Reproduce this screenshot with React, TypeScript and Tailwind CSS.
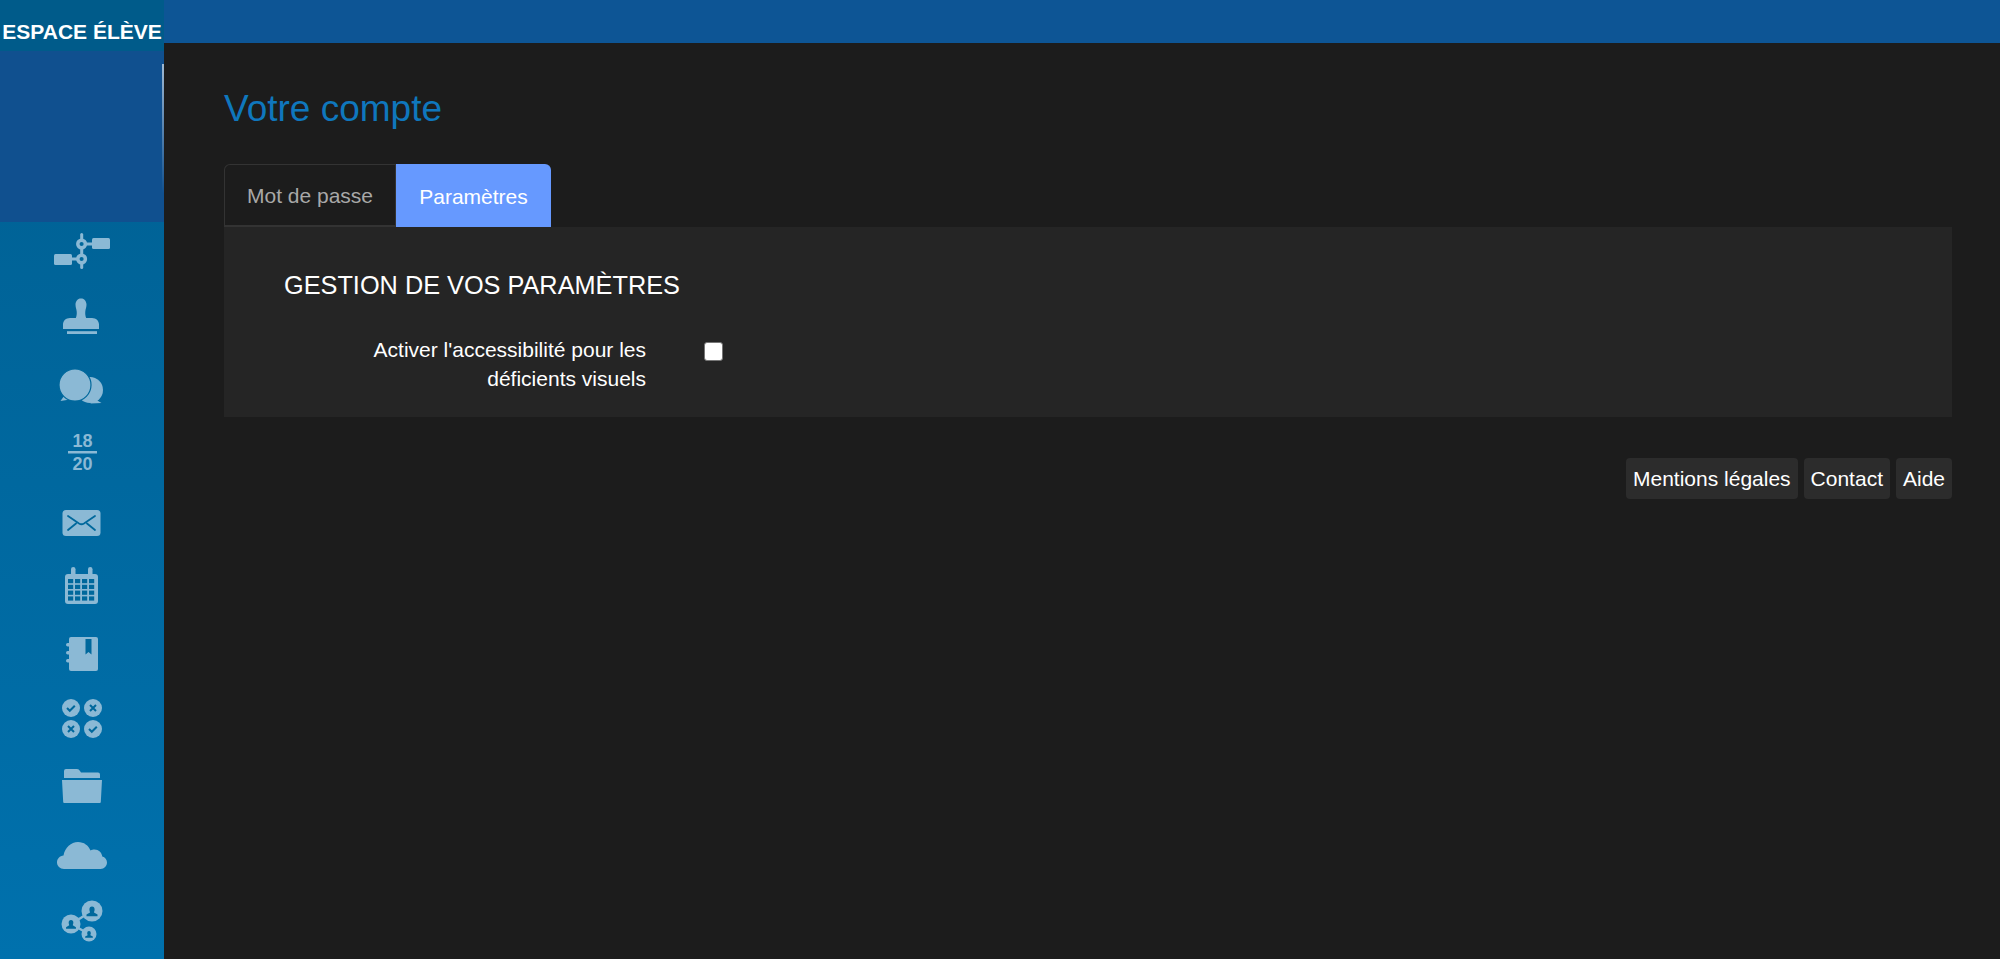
import React from 'react';

const ICON = '#8bb9d5';
const HOLE = '#00689c';

const Satellite = () => (
  <svg width="60" height="48" viewBox="0 0 60 48" fill={ICON}>
    <rect x="41" y="10" width="18" height="11" rx="1.5" />
    <rect x="3" y="26" width="18" height="11" rx="1.5" />
    <rect x="29.2" y="5" width="3" height="36" rx="1.5" />
    <rect x="30" y="14.5" width="12" height="3" />
    <rect x="20" y="29.5" width="10" height="3" />
    <circle cx="30.6" cy="16" r="3.800" fill={HOLE} stroke={ICON} strokeWidth="3.500" />
    <circle cx="30.6" cy="31" r="3.800" fill={HOLE} stroke={ICON} strokeWidth="3.500" />
  </svg>
);

const Stamp = () => (
  <svg width="60" height="48" viewBox="0 0 60 48" fill={ICON}>
    <path d="M31.500 3c-4 0-7 2.600-7 6.600 0 3 1 4.800 1.200 6.800.2 2.200 0 4.400-.9 6.600h-5.800c-4 0-7 2.800-7 6.500v4.500h36v-4.500c0-3.700-3-6.500-7-6.500h-5.800c-.9-2.200-1.100-4.400-.9-6.600.2-2 1.200-3.800 1.200-6.800 0-4-3-6.600-7-6.600z" />
    <rect x="16" y="36.200" width="30" height="2.800" />
  </svg>
);

const Chat = () => (
  <svg width="60" height="48" viewBox="0 0 60 48" fill={ICON}>
    <path d="M42 36l8.500 5-11 .5z" />
    <circle cx="39" cy="28" r="13" />
    <path d="M13 34l-3.500 5 9.500-1.500z" />
    <circle cx="24" cy="23" r="16" stroke={HOLE} strokeWidth="1.200" />
  </svg>
);

const Grade = () => (
  <svg width="60" height="48" viewBox="0 0 60 48" fill={ICON} fontFamily="'Liberation Sans', sans-serif" fontWeight="700" fontSize="18" textAnchor="middle">
    <text x="31.500" y="18">18</text>
    <rect x="17" y="22" width="29" height="2.500" />
    <text x="31.500" y="41">20</text>
  </svg>
);

const Mail = () => (
  <svg width="60" height="48" viewBox="0 0 60 48">
    <rect x="11.500" y="14" width="38" height="26" rx="3.500" fill={ICON} />
    <path d="M17 20l11 7.500q2.500 1.500 5 0l11-7.500M17 34l8-6.500M44 34l-8-6.500" fill="none" stroke={HOLE} strokeWidth="1.800" strokeLinecap="round" />
  </svg>
);

const Calendar = () => {
  const cells: React.ReactNode[] = [];
  for (let r = 0; r < 4; r++) {
    for (let c = 0; c < 4; c++) {
      cells.push(<rect key={`${r}-${c}`} x={17 + c * 7} y={16 + r * 5.800} width="5.200" height="4.200" fill={HOLE} />);
    }
  }
  return (
    <svg width="60" height="48" viewBox="0 0 60 48" fill={ICON}>
      <rect x="20" y="4" width="4.500" height="10" rx="2.200" />
      <rect x="37" y="4" width="4.500" height="10" rx="2.200" />
      <rect x="14" y="11" width="33" height="30" rx="3" />
      {cells}
    </svg>
  );
};

const Notebook = () => (
  <svg width="60" height="48" viewBox="0 0 60 48" fill={ICON}>
    <rect x="18" y="7" width="29" height="34" rx="2" />
    <rect x="15" y="13" width="5" height="3.500" rx="1.700" />
    <rect x="15" y="21" width="5" height="3.500" rx="1.700" />
    <rect x="15" y="29" width="5" height="3.500" rx="1.700" />
    <path d="M34.500 9h6v15.500l-3-2.500-3 2.500z" fill={HOLE} />
  </svg>
);

const Marks = () => {
  const check = (x: number, y: number) => `M${x - 4} ${y}l2.800 2.800 5-5`;
  const cross = (x: number, y: number) => `M${x - 3} ${y - 3}l6 6m0-6l-6 6`;
  return (
    <svg width="60" height="48" viewBox="0 0 60 48">
      <circle cx="20" cy="11" r="9" fill={ICON} />
      <circle cx="42" cy="11" r="9" fill={ICON} />
      <circle cx="20" cy="32" r="9" fill={ICON} />
      <circle cx="42" cy="32" r="9" fill={ICON} />
      <path d={`${check(20, 11)}${cross(42, 11)}${cross(20, 32)}${check(42, 32)}`} fill="none" stroke={HOLE} strokeWidth="2" />
    </svg>
  );
};

const Folder = () => (
  <svg width="60" height="48" viewBox="0 0 60 48" fill={ICON}>
    <path d="M13 14V7q0-2 2-2h11q2 0 3 2l1 1.500h17q2 0 2 2V14z" />
    <path d="M11 16h40l-1.200 22q0 1-1 1H13.200q-1 0-1-1z" />
  </svg>
);

const Cloud = () => (
  <svg width="60" height="48" viewBox="0 0 60 48" fill={ICON}>
    <path d="M13 38c-4 0-7-2.800-7-6.700 0-3.600 2.800-6.500 6.500-6.800C14 16.500 20 11 27 11c6 0 10.500 3.500 12.500 8.500 1.300-.8 2.500-1.100 4-1.100 4.200 0 7.300 3 7.800 7.200 2.800.7 4.700 3 4.700 6 0 3.600-2.800 6.400-6.400 6.400z" />
  </svg>
);

const person = (cx: number, cy: number, s: number) => (
  <path
    d={`M${cx} ${cy - 5 * s}a${2.600 * s} ${2.900 * s} 0 0 1 ${2.600 * s} ${2.900 * s}c0 ${1.500 * s} ${-0.600 * s} ${2.200 * s} ${-0.600 * s} ${3 * s}l${3.500 * s} ${2.100 * s}v${1.800 * s}h${-11 * s}v${-1.800 * s}l${3.500 * s} ${-2.100 * s}c0 ${-0.800 * s} ${-0.600 * s} ${-1.500 * s} ${-0.600 * s} ${-3 * s}a${2.600 * s} ${2.900 * s} 0 0 1 ${2.600 * s} ${-2.900 * s}z`}
    fill={HOLE}
  />
);

const Network = () => (
  <svg width="60" height="48" viewBox="0 0 60 48" fill={ICON}>
    <path d="M20 26L41 13M20 26L38 36" stroke={ICON} strokeWidth="2.500" />
    <circle cx="41" cy="13" r="10.500" />
    <circle cx="20" cy="26" r="9.500" />
    <circle cx="38" cy="36" r="7.500" />
    {person(41, 13.500, 1)}
    {person(20, 26.500, 0.900)}
    {person(38, 36.500, 0.700)}
  </svg>
);

const icons = [Satellite, Stamp, Chat, Grade, Mail, Calendar, Notebook, Marks, Folder, Cloud, Network];

export default function App() {
  return (
    <div className="flex h-screen overflow-hidden bg-[#1c1c1c] font-['Liberation_Sans',Arial,sans-serif]">
      <aside className="flex w-[164px] shrink-0 flex-col bg-gradient-to-b from-[#005f91] to-[#0071ad]">
        <div className="flex h-[51px] shrink-0 items-start justify-center bg-[#005b8a] pt-[20px] text-[21px] font-bold leading-[23px] whitespace-nowrap text-white">
          ESPACE ÉLÈVE
        </div>
        <div className="flex h-[171px] shrink-0 justify-end bg-[#10508f] pt-[13px]">
          <div className="h-[130px] w-[2px] bg-gradient-to-b from-white/60 to-white/0" />
        </div>
        <nav className="flex flex-col items-center pr-[2px] pt-[6px]">
          {icons.map((Icon, i) => (
            <div key={i} className="flex h-[67px] w-full justify-center">
              <Icon />
            </div>
          ))}
        </nav>
      </aside>

      <main className="flex min-w-0 flex-1 flex-col">
        <div className="h-[43px] bg-[#0d5595]" />
        <div className="pl-[60px] pr-[48px]">
          <h1 className="mt-[43px] text-[37px] leading-[46px] text-[#0f77bd]">Votre compte</h1>
          <div className="mt-[32px] flex h-[63px] text-[21px]">
            <div className="flex w-[172px] items-center justify-center rounded-tl-[6px] border border-b-2 border-[#333333] pt-[2px] text-[#a8a8a8]">
              Mot de passe
            </div>
            <div className="flex w-[155px] items-center justify-center rounded-tr-[6px] bg-[#6699ff] pt-[2px] text-white">
              Paramètres
            </div>
          </div>
          <section className="h-[190px] bg-[#252525] pl-[60px] pt-[40px]">
            <h2 className="text-[25.300px] leading-[36px] text-white">GESTION DE VOS PARAMÈTRES</h2>
            <div className="mt-[32px] flex items-start">
              <label className="w-[362px] text-right text-[21px] leading-[29px] text-white">
                Activer l'accessibilité pour les
                <br />
                déficients visuels
              </label>
              <input type="checkbox" className="ml-[58px] mt-[7px] h-[19px] w-[19px] appearance-none rounded-[3px] border border-[#767676] bg-white" />
            </div>
          </section>
          <footer className="mt-[41px] flex justify-end gap-[6px] text-[21px] text-white">
            <a className="flex h-[41px] items-center rounded-[4px] bg-[#2c2c2c] px-[7px]">Mentions légales</a>
            <a className="flex h-[41px] items-center rounded-[4px] bg-[#2c2c2c] px-[7px]">Contact</a>
            <a className="flex h-[41px] items-center rounded-[4px] bg-[#2c2c2c] px-[7px]">Aide</a>
          </footer>
        </div>
      </main>
    </div>
  );
}
